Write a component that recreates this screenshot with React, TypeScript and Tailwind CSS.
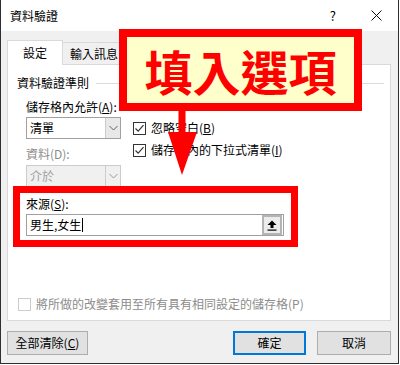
import type { ReactNode } from "react";

function CheckBox({ checked, disabled }: { checked?: boolean; disabled?: boolean }) {
  return (
    <span
      className={`inline-flex h-[13px] w-[13px] shrink-0 items-center justify-center border bg-white ${
        disabled ? "border-[#cccccc]" : "border-[#333333]"
      }`}
    >
      {checked && (
        <svg width="11" height="11" viewBox="0 0 11 11">
          <path d="M1.5 5.5 L4.2 8.2 L9.5 2.2" fill="none" stroke="#333" strokeWidth="1.2" />
        </svg>
      )}
    </span>
  );
}

function Chevron({ color = "#606060" }: { color?: string }) {
  return (
    <svg width="9" height="6" viewBox="0 0 9 6">
      <path d="M0.5 1 L4.5 5 L8.5 1" fill="none" stroke={color} strokeWidth="1" />
    </svg>
  );
}

function Select({ value, disabled }: { value: string; disabled?: boolean }) {
  return (
    <div
      className={`flex h-[22px] w-[95px] border ${
        disabled ? "border-[#cccccc] bg-[#f0f0f0] text-[#a0a0a0]" : "border-[#a0a0a0] bg-white text-black"
      }`}
    >
      <span className="flex-1 pl-[3px] leading-[20px]">{value}</span>
      <span
        className={`flex w-[15px] items-center justify-center border-l ${
          disabled ? "border-[#cccccc] bg-[#f0f0f0]" : "border-[#cccccc] bg-[#e8e8e8]"
        }`}
      >
        <Chevron color={disabled ? "#9a9a9a" : "#606060"} />
      </span>
    </div>
  );
}

function Label({ children, disabled }: { children: ReactNode; disabled?: boolean }) {
  return (
    <div className={`h-[16px] leading-[16px] ${disabled ? "text-[#8c8c8c]" : "text-black"}`}>
      {children}
    </div>
  );
}

function DialogButton({ children, primary, className = "" }: { children: ReactNode; primary?: boolean; className?: string }) {
  return (
    <div
      className={`flex h-[24px] items-center justify-center bg-[#e1e1e1] ${
        primary ? "border-2 border-[#0078d7]" : "border border-[#adadad]"
      } ${className}`}
    >
      {children}
    </div>
  );
}

export default function App() {
  return (
    <div className="relative h-[365px] w-[400px] bg-white font-['Noto_Sans_CJK_TC','Noto_Sans',sans-serif] text-[12px] text-black">
      <div className="flex h-[364px] w-[399px] flex-col border-x border-b border-[#2f2f2f]">
        {/* title bar */}
        <div className="flex h-[31px] shrink-0 items-center bg-white pl-[9px]">
          <span className="leading-none">資料驗證</span>
          <span className="ml-auto mr-[35px] text-[13px] leading-none">?</span>
          <svg width="11" height="11" viewBox="0 0 11 11" className="mr-[16px]">
            <path d="M0.5 0.5 L10.5 10.5 M10.5 0.5 L0.5 10.5" stroke="#111" strokeWidth="1" />
          </svg>
        </div>

        {/* body */}
        <div className="flex flex-1 flex-col bg-[#f0f0f0] pl-[6px] pr-[7px]">
          {/* tabs */}
          <div className="mt-[8px] flex h-[25px] items-end">
            <div className="relative z-10 -mb-px flex h-[25px] w-[56px] items-center justify-center border border-b-0 border-[#d9d9d9] bg-white">
              設定
            </div>
            <div className="flex h-[22px] w-[64px] items-center border-t border-r border-[#d9d9d9] pl-[7px]">
              輸入訊息
            </div>
          </div>

          {/* panel */}
          <div className="flex h-[257px] w-[384px] flex-col border border-[#d9d9d9] bg-white pl-[9px]">
            <div className="mt-[10px] flex h-[16px] items-center">
              <span className="leading-[16px]">資料驗證準則</span>
              <span className="ml-[7px] mr-[6px] h-px flex-1 bg-[#dcdcdc]" />
            </div>

            <div className="flex pl-[9px]">
              <div className="flex w-[95px] flex-col">
                <div className="mt-[8px] whitespace-nowrap">
                  <Label>
                    儲存格內允許(<u>A</u>):
                  </Label>
                </div>
                <div className="mt-[2px]">
                  <Select value="清單" />
                </div>
                <div className="mt-[7px]">
                  <Label disabled>資料(D):</Label>
                </div>
                <div className="mt-[3px]">
                  <Select value="介於" disabled />
                </div>
              </div>

              <div className="ml-[12px] mt-[30px] flex flex-col gap-[8px]">
                <div className="flex h-[14px] items-center gap-[5px] whitespace-nowrap">
                  <CheckBox checked />
                  <span className="leading-[14px]">
                    忽略空白(<u>B</u>)
                  </span>
                </div>
                <div className="flex h-[14px] items-center gap-[5px] whitespace-nowrap">
                  <CheckBox checked />
                  <span className="leading-[14px]">
                    儲存格內的下拉式清單(<u>I</u>)
                  </span>
                </div>
              </div>
            </div>

            <div className="pl-[9px]">
              <div className="mt-[9px]">
                <Label>
                  來源(<u>S</u>):
                </Label>
              </div>
              <div className="mt-[2px] flex h-[22px] w-[258px] items-center border border-[#a0a0a0] bg-white">
                <span className="flex-1 pl-[3px] leading-[20px]">
                  男生,女生<span className="ml-px inline-block h-[14px] w-px translate-y-[2px] bg-black" />
                </span>
                <span className="mr-px flex h-[20px] w-[20px] items-center justify-center border-2 border-[#b4b4b4] bg-[#ececec]">
                  <svg width="10" height="11" viewBox="0 0 10 11">
                    <path d="M5 0.5 L9.5 5 L6.5 5 L6.5 8 L3.5 8 L3.5 5 L0.5 5 Z" fill="#000" />
                    <rect x="0.5" y="9.5" width="9" height="1.2" fill="#000" />
                  </svg>
                </span>
              </div>
            </div>

            <div className="mt-[61px] flex items-center gap-[5px] pl-[1px]">
              <CheckBox disabled />
              <span className="leading-[14px] text-[#8c8c8c]">將所做的改變套用至所有具有相同設定的儲存格(P)</span>
            </div>
          </div>

          {/* buttons */}
          <div className="mt-[10px] flex items-center">
            <DialogButton className="w-[81px]">
              全部清除(<u>C</u>)
            </DialogButton>
            <DialogButton primary className="ml-auto w-[73px]">
              確定
            </DialogButton>
            <DialogButton className="ml-[11px] w-[74px]">取消</DialogButton>
          </div>
        </div>
      </div>

      {/* annotations */}
      <div className="absolute left-[119px] top-[29px] flex h-[82px] w-[243px] items-center justify-center border-[8px] border-[#ff0000] bg-[#ffffcc] text-[48px] font-bold leading-none text-[#ff0000]">
        填入選項
      </div>
      <svg className="absolute left-[166px] top-[111px]" width="33" height="66" viewBox="0 0 33 66">
        <rect x="12.5" y="0" width="7" height="24" fill="#ff0000" />
        <polygon points="2,21 31,21 16,64" fill="#ff0000" />
      </svg>
      <div className="absolute left-[13px] top-[186px] h-[61px] w-[285px] border-[7px] border-[#ff0000]" />
    </div>
  );
}
